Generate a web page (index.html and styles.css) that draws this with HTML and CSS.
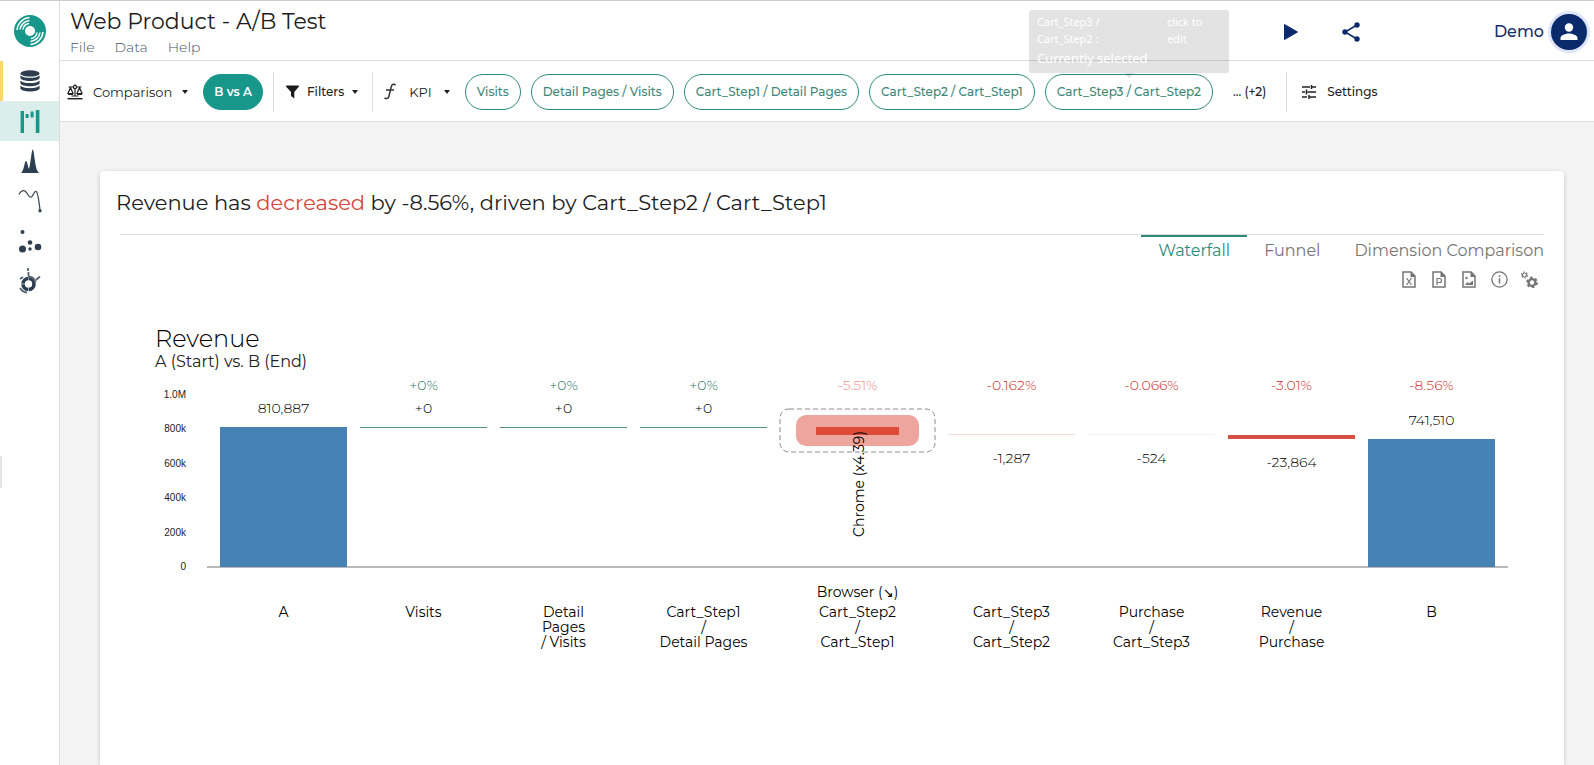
FILE: index.html
```html
<!DOCTYPE html>
<html lang="en">
<head>
<meta charset="utf-8">
<title>Web Product - A/B Test</title>
<link rel="stylesheet" href="styles.css">
</head>
<body>
<div class="app">
  <aside class="sidebar">
    <a class="logo" href="#" aria-label="Home">
      <svg width="32" height="32" viewBox="0 0 32 32"><circle cx="16" cy="16" r="16" fill="#16978a"/><circle cx="16" cy="16" r="5" fill="#fff"/><g fill="none" stroke="#fff" stroke-width="1.5"><path d="M9 14.500a7 7 0 0 1 6-6M6 14.500A10.500 10.500 0 0 1 15.500 5.500M3 15A13.500 13.500 0 0 1 15.500 2.600M23 17.500a7 7 0 0 1-6 6M26 17.500a10.500 10.500 0 0 1-9.500 9M29 17a13.500 13.500 0 0 1-12.500 12.400"/></g></svg>
    </a>
    <nav class="side-nav">
      <button class="side-item side-item-source" aria-label="Data sources">
        <svg width="20" height="22" viewBox="0 0 20 22" fill="#2f3e4e"><ellipse cx="10" cy="3.4" rx="9.6" ry="3.2"/><path d="M.4 5.2c2 3.4 17.200 3.400 19.200 0v2.800c-1 4-18.200 4-19.200 0zM.4 10.400c2 3.400 17.200 3.400 19.200 0v2.800c-1 4-18.200 4-19.200 0zM.4 15.600c2 3.400 17.200 3.400 19.200 0v2.800c-1 4-18.200 4-19.200 0z"/></svg>
      </button>
      <button class="side-item side-item-active" aria-label="Waterfall">
        <svg width="20" height="23" viewBox="0 0 20 23" fill="#16978a"><path d="M.6 1H4v22H.6zM5.600 4h3v4h-3zM10.600 1.500h3v6h-3zM15.800 0h3.600v23h-3.600z"/></svg>
      </button>
      <button class="side-item" aria-label="Distribution">
        <svg width="18" height="24" viewBox="0 0 18 24" fill="#2c3e50"><path d="M.5 24v-1c2.500-1 3-11 4.500-11 1.300 0 1.600 5 3 8C10 13 10.500.5 11.800.5 13.200.5 14 21 17.500 23v1z"/></svg>
      </button>
      <button class="side-item" aria-label="Trend">
        <svg width="24" height="24" viewBox="0 0 24 24"><path d="M.8 5.500C3.500 1 6.500.5 8.500 3.500c1.500 2.500 3 5.500 5 4.500 2-1 2.500-6.500 4.700-5.500 1.800 1 2.600 8 3.800 18.500" fill="none" stroke="#3c4a57" stroke-width="1.300"/><circle cx="22" cy="21.800" r="1.700" fill="#3c4a57"/></svg>
      </button>
      <button class="side-item" aria-label="Scatter">
        <svg width="24" height="24" viewBox="0 0 24 24" fill="#2c3e50"><circle cx="4.500" cy="3" r="2"/><circle cx="4.500" cy="20" r="3.500"/><circle cx="12" cy="13.500" r="2.300"/><circle cx="12" cy="20" r="1.700"/><circle cx="20" cy="18" r="3.300"/></svg>
      </button>
      <button class="side-item" aria-label="Sunburst">
        <svg width="24" height="26" viewBox="0 0 24 26" fill="none" stroke="#2c3e50"><circle cx="10.500" cy="16" r="5.500" stroke-width="3.600" stroke-dasharray="8 .6"/><path d="M10 8.600a8 8 0 0 1 7.500 5.500" stroke-width="2" stroke="#55636f"/><path d="M10 0v3M10.500 4v4M18 12l4-3.500M2 11l3-2M2 20c2 3 4 4.500 7 4.500" stroke-width="1.800" stroke="#55636f"/></svg>
      </button>
    </nav>
    <span class="drawer-handle"></span>
  </aside>

  <div class="workspace">
    <header class="header">
      <div class="heading">
        <h1 class="title">Web Product - A/B Test</h1>
        <nav class="menu">
          <button class="menu-item">File</button>
          <button class="menu-item">Data</button>
          <button class="menu-item">Help</button>
        </nav>
      </div>
      <div class="header-actions">
        <button class="icon-button" aria-label="Play"><svg width="16" height="18" viewBox="0 0 16 18"><path d="M1.500 1.500v15L14.500 9z" fill="#0b2a6b" stroke="#0b2a6b" stroke-linejoin="round"/></svg></button>
        <button class="icon-button" aria-label="Share"><svg width="18" height="20" viewBox="0 0 18 20"><path d="M15 3 3 10l12 7" fill="none" stroke="#0b2a6b" stroke-width="1.500"/><g fill="#0b2a6b"><circle cx="15" cy="3" r="2.700"/><circle cx="3" cy="10" r="2.700"/><circle cx="15" cy="17" r="2.700"/></g></svg></button>
        <button class="account">Demo
          <span class="avatar"><svg width="18" height="18" viewBox="0 0 18 18" fill="#fff"><circle cx="9" cy="4.500" r="4.200"/><path d="M.5 17v-2c0-3 5.500-4.500 8.500-4.500s8.500 1.500 8.500 4.500v2z"/></svg></span>
        </button>
      </div>
    </header>

    <div class="toolbar">
      <div class="tool-group">
        <button class="tool tool-comparison">
          <svg width="16" height="16" viewBox="0 0 16 16" fill="none" stroke="#222" stroke-width="1.200"><path d="M8 .5V12M1.500 3h4.700M9.800 3h4.700M3.500 3.500 1 9.500h5zM12.500 3.500 10 9.500h5zM1 10.500h5M10 10.500h5M4.500 12h7"/><circle cx="8" cy="3" r="1.600" fill="#fff"/><path d="M.5 14.700h15" stroke-width="1.500"/></svg>
          <span>Comparison</span><span class="caret"></span>
        </button>
        <button class="chip chip-filled">B vs A</button>
      </div>
      <div class="tool-group">
        <button class="tool tool-filters">
          <svg width="13" height="14" viewBox="0 0 13 14" fill="#1c1c1c"><path d="M.6.5h11.800c.6 0 .8.700.4 1.200L8.300 7v6.500L5 11V7L.2 1.700C-.2 1.200 0 .5.600.5z"/></svg>
          <span>Filters</span><span class="caret"></span>
        </button>
      </div>
      <div class="tool-group">
        <button class="tool tool-kpi">
          <svg width="14" height="17" viewBox="0 0 14 17" fill="none" stroke="#333" stroke-width="1.500"><path d="M12.500 2.200C11 .6 9 1 8.300 3.500L6 13c-.6 2.600-2.500 3.200-4.500 1.800M3 7h8"/></svg>
          <span>KPI</span><span class="caret"></span>
        </button>
        <div class="chips">
          <button class="chip">Visits</button>
          <button class="chip">Detail Pages / Visits</button>
          <button class="chip">Cart_Step1 / Detail Pages</button>
          <button class="chip">Cart_Step2 / Cart_Step1</button>
          <div class="chip-anchor">
            <button class="chip" aria-describedby="kpi-tip">Cart_Step3 / Cart_Step2</button>
            <div class="tooltip" id="kpi-tip" role="tooltip">
              <div class="tooltip-row"><span class="tooltip-name">Cart_Step3 / Cart_Step2 :</span><span class="tooltip-hint">click to edit</span></div>
              <div class="tooltip-state">Currently selected</div>
            </div>
          </div>
        </div>
        <button class="more">... (+2)</button>
      </div>
      <div class="tool-group">
        <button class="tool tool-settings">
          <svg width="14" height="14" viewBox="0 0 14 14" fill="none" stroke="#222" stroke-width="1.500"><path d="M0 2h8M10 2h4M9.500 0v4M0 7h3M5.500 7H14M4.500 4.500v5M0 12h5M7 12h7M7 10v4"/></svg>
          <span>Settings</span>
        </button>
      </div>
    </div>

    <main class="content">
      <section class="card">
        <h2 class="insight">Revenue has <em class="down">decreased</em> by -8.56%, driven by Cart_Step2 / Cart_Step1</h2>
        <div class="tabs">
          <button class="tab tab-active">Waterfall</button>
          <button class="tab">Funnel</button>
          <button class="tab">Dimension Comparison</button>
        </div>
        <div class="exports">
          <button class="export" aria-label="Export to Excel"><svg width="14" height="17" viewBox="0 0 14 17"><path d="M1 1h8l4 4v11H1z" fill="none" stroke="#757575" stroke-width="1.500"/><path d="M8.500.5V6H13.500z" fill="#757575"/><path d="m4.500 7 5 7M9.500 7l-5 7" stroke="#757575" stroke-width="1.200"/></svg></button>
          <button class="export" aria-label="Export to PowerPoint"><svg width="14" height="17" viewBox="0 0 14 17"><path d="M1 1h8l4 4v11H1z" fill="none" stroke="#757575" stroke-width="1.500"/><path d="M8.500.5V6H13.500z" fill="#757575"/><path d="M5 14V7.500h2.500a2 2 0 0 1 0 4H5" fill="none" stroke="#757575" stroke-width="1.200"/></svg></button>
          <button class="export" aria-label="Export as image"><svg width="14" height="17" viewBox="0 0 14 17"><path d="M1 1h8l4 4v11H1z" fill="none" stroke="#757575" stroke-width="1.500"/><path d="M8.500.5V6H13.500zM3 14l2.500-3 1.500 1.500L11 9.500V14z" fill="#757575"/><circle cx="4.500" cy="7" r="1.200" fill="#757575"/></svg></button>
          <button class="export" aria-label="Information"><svg width="17" height="17" viewBox="0 0 17 17"><circle cx="8.500" cy="8.500" r="7.600" fill="none" stroke="#757575" stroke-width="1.300"/><path d="M8.500 7.200v5.300M8.500 4.300v1.600" stroke="#757575" stroke-width="1.500"/></svg></button>
          <button class="export" aria-label="Chart options"><svg width="17" height="17" viewBox="0 0 17 17" fill="none" stroke="#757575"><circle cx="11" cy="11.500" r="3.400" stroke-width="2.400"/><circle cx="11" cy="11.500" r="5" stroke-width="1.800" stroke-dasharray="2.600 2.636"/><circle cx="3.500" cy="4" r="2" stroke-width="1.200"/><circle cx="3.500" cy="4" r="3" stroke-width="1.200" stroke-dasharray="1.500 1.640"/></svg></button>
        </div>

        <figure class="chart">
          <figcaption class="chart-caption">
            <span class="chart-title">Revenue</span>
            <span class="chart-subtitle">A (Start) vs. B (End)</span>
          </figcaption>
          <div class="chart-body">
            <div class="y-axis"><span>1.0M</span><span>800k</span><span>600k</span><span>400k</span><span>200k</span><span>0</span></div>
            <div class="plot">
              <div class="column">
                <span class="value">810,887</span>
                <div class="bar-total" style="height:140px"></div>
              </div>
              <div class="column" style="padding-bottom:138px">
                <span class="percent up">+0%</span><span class="value">+0</span>
                <div class="bar-flat"></div>
              </div>
              <div class="column" style="padding-bottom:138px">
                <span class="percent up">+0%</span><span class="value">+0</span>
                <div class="bar-flat"></div>
              </div>
              <div class="column" style="padding-bottom:138px">
                <span class="percent up">+0%</span><span class="value">+0</span>
                <div class="bar-flat"></div>
              </div>
              <div class="column" style="padding-bottom:114px">
                <span class="percent faded">-5.51%</span>
                <div class="selection">
                  <svg class="selection-outline" width="100%" height="100%"><rect x="0" y="0" width="100%" height="100%" rx="9" fill="none" stroke="#8c8c8c" stroke-dasharray="5 3"/></svg>
                  <div class="selection-total"><div class="selection-part"></div></div>
                </div>
                <span class="segment-label">Chrome (x4.39)</span>
              </div>
              <div class="column" style="padding-bottom:99px">
                <span class="percent down">-0.162%</span>
                <div class="bar-loss" style="height:1px;opacity:0.2"></div><span class="value-below">-1,287</span>
              </div>
              <div class="column" style="padding-bottom:99px">
                <span class="percent down">-0.066%</span>
                <div class="bar-loss" style="height:1px;opacity:0.08"></div><span class="value-below">-524</span>
              </div>
              <div class="column" style="padding-bottom:95px">
                <span class="percent down">-3.01%</span>
                <div class="bar-loss" style="height:4px"></div><span class="value-below">-23,864</span>
              </div>
              <div class="column">
                <span class="percent down">-8.56%</span><span class="value">741,510</span>
                <div class="bar-total" style="height:128px"></div>
              </div>
            </div>
            <div class="x-axis">
              <span class="tick">A</span>
              <span class="tick">Visits</span>
              <span class="tick">Detail<br>Pages<br>/ Visits</span>
              <span class="tick">Cart_Step1<br>/<br>Detail Pages</span>
              <span class="tick"><span class="dimension">Browser (<span class="arrow">↘</span>)</span>Cart_Step2<br>/<br>Cart_Step1</span>
              <span class="tick">Cart_Step3<br>/<br>Cart_Step2</span>
              <span class="tick">Purchase<br>/<br>Cart_Step3</span>
              <span class="tick">Revenue<br>/<br>Purchase</span>
              <span class="tick">B</span>
            </div>
          </div>
        </figure>
      </section>
    </main>
  </div>
</div>
</body>
</html>
```
FILE: styles.css
```css
* { box-sizing: border-box; }
body {
  margin: 0;
  font-family: Montserrat, Inter, "Open Sans", sans-serif;
  font-size: 12px;
  color: #222;
  background: #f3f3f3;
}
button {
  margin: 0;
  padding: 0;
  border: 0;
  background: none;
  font: inherit;
  color: inherit;
  cursor: pointer;
}
svg { display: block; flex: none; }
h1, h2, figure { margin: 0; font-weight: 400; }

.app { display: flex; height: 100vh; border-top: 1px solid #ccc; overflow: hidden; }

/* Sidebar */
.sidebar {
  position: relative;
  flex: none;
  width: 60px;
  background: #fff;
  border-right: 1px solid #ddd;
}
.logo { display: flex; align-items: center; justify-content: center; height: 60px; }
.side-nav { display: flex; flex-direction: column; }
.side-item { display: flex; align-items: center; justify-content: center; height: 40px; }
.side-item-source { border-left: 3px solid #fbd669; padding-right: 3px; }
.side-item-active { background: #dceeeb; }
.drawer-handle { position: absolute; left: 0; top: 455px; width: 2px; height: 32px; background: #e5e5e5; }

/* Header */
.workspace { display: flex; flex-direction: column; flex: 1; min-width: 0; }
.header {
  display: flex;
  align-items: center;
  justify-content: space-between;
  height: 60px;
  padding: 2px 7px 0 10px;
  background: #fff;
  border-bottom: 1px solid #ddd;
}
.heading { padding-top: 2px; }
.title { font-size: 22px; line-height: 28px; color: #1c1c1c; }
.menu { display: flex; gap: 20px; }
.menu-item { font-size: 14px; line-height: 22px; font-weight: 300; color: #45536a; }
.header-actions { display: flex; align-items: center; }
.icon-button { margin-right: 43px; }
.account {
  display: flex;
  align-items: center;
  gap: 7px;
  margin-left: 91px;
  font-size: 16px;
  font-weight: 500;
  color: #1a2f66;
}
.avatar {
  display: flex;
  align-items: center;
  justify-content: center;
  width: 36px;
  height: 36px;
  border-radius: 50%;
  background: #0b2a6b;
  box-shadow: 0 0 0 3px #dfe4f6;
}

/* Toolbar */
.toolbar {
  display: flex;
  align-items: center;
  height: 61px;
  padding: 1px 0 0 7px;
  background: #fff;
  border-bottom: 1px solid #ddd;
}
.tool-group { display: flex; align-items: center; height: 40px; white-space: nowrap; }
.tool-group + .tool-group { border-left: 1px solid #ddd; }
.tool { display: flex; align-items: center; gap: 8px; font-weight: 500; }
.tool-comparison { margin-right: 15px; gap: 10px; font-size: 13px; font-weight: 400; }
.tool-filters { margin: 0 14px 0 12px; }
.tool-kpi { gap: 12px; margin: 0 15px 0 10px; font-size: 13px; font-weight: 400; }
.tool-settings { gap: 11px; margin-left: 15px; }
.caret { border: 3px solid transparent; border-top: 4px solid #222; border-bottom: 0; }
.chips { display: flex; gap: 10px; }
.chip {
  height: 36px;
  padding: 0 11px;
  border: 1px solid #2b8a7c;
  border-radius: 18px;
  color: #3d8778;
  background: #fff;
  font-weight: 500;
}
.chip-filled { margin-right: 10px; padding: 0 10px; border-color: #16978a; background: #16978a; color: #fff; font-weight: 600; }
.more { margin: 0 20px; font-weight: 500; }
.chip-anchor { position: relative; }
.tooltip {
  position: absolute;
  left: 50%;
  bottom: 37px;
  width: 200px;
  margin-left: -100px;
  padding: 3px 8px 4px;
  border-radius: 3px;
  background: rgba(0, 0, 0, 0.11);
  color: #fff;
  font-family: "Noto Sans", sans-serif;
  font-size: 11px;
  line-height: 17px;
  white-space: normal;
}
.tooltip::after {
  content: "";
  position: absolute;
  left: 95px;
  top: 100%;
  border: 5px solid transparent;
  border-top-color: rgba(0, 0, 0, 0.11);
  border-bottom: 0;
}
.tooltip-row { display: flex; justify-content: space-between; }
.tooltip-name { width: 70px; }
.tooltip-hint { width: 54px; }
.tooltip-state { font-size: 13px; line-height: 22px; }

/* Card */
.content { flex: 1; padding: 49px 30px 0 40px; min-height: 0; }
.card {
  height: 100%;
  padding: 0 20px;
  border-radius: 4px 4px 0 0;
  background: #fff;
  box-shadow: 0 1px 4px rgba(0, 0, 0, 0.2);
}
.insight {
  margin: 0 0 0 -4px;
  padding: 18px 0;
  font-size: 21px;
  line-height: 27px;
  color: #1c1c1c;
}
.down { font-style: normal; color: #d6453d; }
.tabs { display: flex; justify-content: flex-end; border-top: 1px solid #ddd; }
.tab {
  padding: 4px 17px;
  border-top: 2px solid transparent;
  font-size: 16px;
  line-height: 20px;
  color: #757575;
}
.tab-active { border-color: #2b8a7c; color: #2b8a7c; }
.tab:last-child { padding-right: 0; }
.exports { display: flex; justify-content: flex-end; }
.export { display: flex; align-items: center; justify-content: center; width: 30px; height: 28px; }

/* Chart */
.chart { padding: 32px 36px 0 35px; }
.chart-caption { display: flex; flex-direction: column; }
.chart-title { font-size: 24px; line-height: 28px; font-weight: 300; color: #000; }
.chart-subtitle { font-size: 16px; line-height: 18px; }
.chart-body { display: grid; grid-template-columns: 52px 1fr; margin-top: 4px; }
.y-axis {
  display: flex;
  flex-direction: column;
  justify-content: space-between;
  align-items: flex-end;
  height: 184px;
  margin-top: 14px;
  padding-right: 21px;
  font-family: "Liberation Sans", sans-serif;
  font-size: 10px;
  line-height: 12px;
}
.plot, .x-axis {
  display: grid;
  grid-template-columns: repeat(4, 127fr) 155fr repeat(4, 127fr);
  gap: 13px;
  padding: 0 13px;
}
.plot { height: 193px; border-bottom: 2px solid #b9b9b9; }
.column { position: relative; display: flex; flex-direction: column; justify-content: flex-end; text-align: center; }
.percent { margin-bottom: auto; font-size: 14px; line-height: 20px; font-weight: 300; }
.up { color: #2a7465; }
.faded { color: #eb8f88; }
.column .down { color: #cc2f2f; }
.value, .value-below { font-size: 14px; line-height: 18px; font-weight: 300; color: #000; }
.value { margin-bottom: 10px; }
.value-below { margin-top: 14px; }
.bar-total { margin-bottom: -1px; background: #4682b4; }
.bar-flat { height: 1px; background: #4f9084; }
.bar-loss { background: #d65043; }
.selection {
  position: relative;
  display: flex;
  justify-content: center;
  height: 43px;
  padding: 6px 16px;
}
.selection-outline { position: absolute; inset: 0; overflow: visible; }
.selection-total {
  display: flex;
  align-items: center;
  justify-content: center;
  flex: 1;
  border-radius: 10px;
  background: #eea59d;
}
.selection-part { width: 67%; height: 8px; background: #dd4b39; }
.segment-label {
  position: absolute;
  left: 50%;
  bottom: 29px;
  margin-left: -9px;
  font-size: 14px;
  line-height: 20px;
  color: #000;
  writing-mode: vertical-rl;
  transform: rotate(180deg);
}
.x-axis { grid-column: 2; padding-top: 10px; font-size: 14px; line-height: 15px; color: #000; text-align: center; }
.tick { display: block; padding-top: 22px; white-space: nowrap; }
.dimension { display: block; margin-top: -20px; padding-bottom: 5px; }
.arrow { font-family: "DejaVu Sans", sans-serif; font-size: 13px; line-height: 1; }
```
